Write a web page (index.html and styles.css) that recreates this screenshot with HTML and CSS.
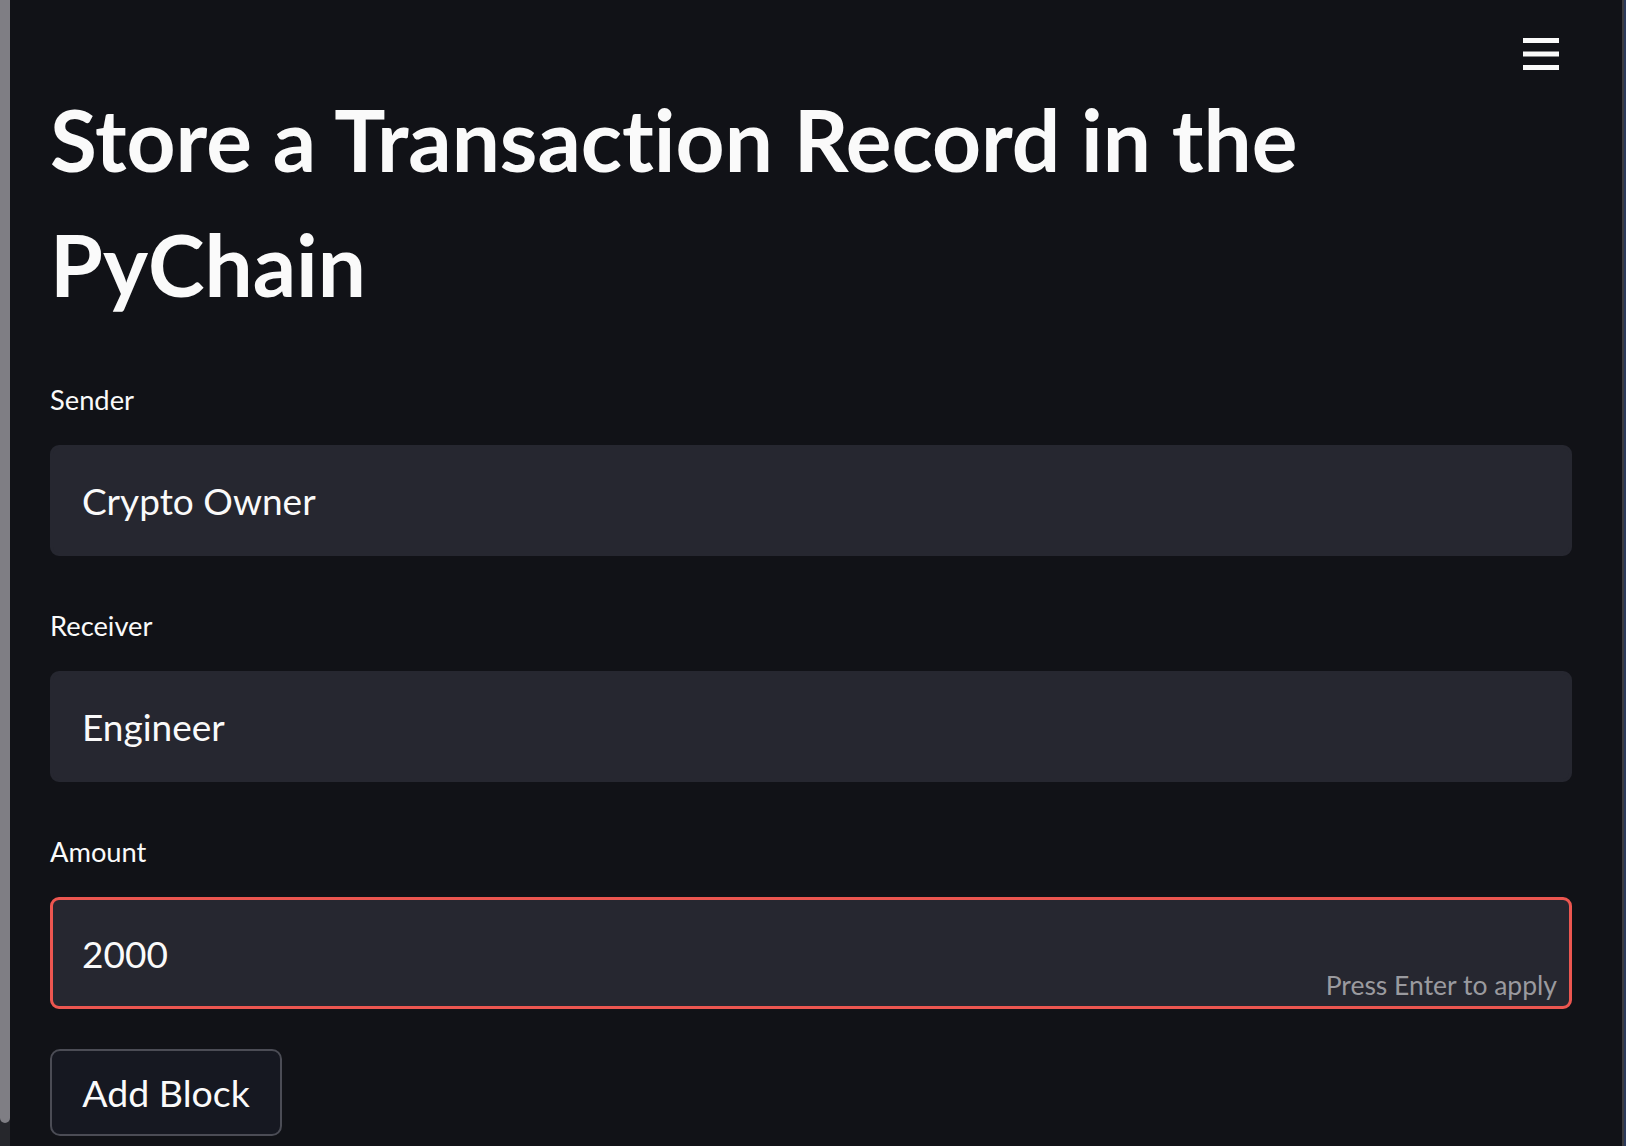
FILE: index.html
```html
<!DOCTYPE html>
<html lang="en">
<head>
<meta charset="utf-8">
<title>PyChain</title>
<link rel="stylesheet" href="styles.css">
</head>
<body>
<div class="app">
  <div class="scroll-track"><div class="scroll-thumb"></div></div>
  <main class="main">
    <button class="menu" aria-label="Menu">
      <svg width="36" height="33" viewBox="0 0 36 33"><rect x="0" y="0" width="36" height="5" fill="#fafafa"/><rect x="0" y="13.5" width="36" height="5" fill="#fafafa"/><rect x="0" y="27" width="36" height="5" fill="#fafafa"/></svg>
    </button>
    <h1 class="title">Store a Transaction Record in the PyChain</h1>
    <div class="field">
      <label class="label">Sender</label>
      <div class="input"><span class="value">Crypto Owner</span></div>
    </div>
    <div class="field">
      <label class="label">Receiver</label>
      <div class="input"><span class="value">Engineer</span></div>
    </div>
    <div class="field">
      <label class="label">Amount</label>
      <div class="input focused"><span class="value">2000</span><span class="hint">Press Enter to apply</span></div>
    </div>
    <button class="btn">Add Block</button>
  </main>
  <div class="edge"><div class="edge-a"></div><div class="edge-b"></div></div>
</div>
</body>
</html>
```
FILE: styles.css
```css
html, body {
  margin: 0;
  padding: 0;
  height: 100%;
  background: #111217;
  overflow: hidden;
}
.app {
  display: flex;
  height: 1146px;
  font-family: Lato, "Noto Sans", sans-serif;
  font-variant-ligatures: none;
  color: #fafafa;
}
.scroll-track {
  width: 10px;
  flex: none;
  background: #26272c;
}
.scroll-thumb {
  height: 1123px;
  background: #7f7e84;
  border-radius: 0 0 5px 5px;
}
.main {
  flex: 1;
  position: relative;
  padding: 77px 50px 0 40px;
}
.menu {
  position: absolute;
  top: 38px;
  right: 63px;
  padding: 0;
  border: 0;
  background: none;
  line-height: 0;
}
.title {
  margin: 0 0 53px;
  font-size: 85.5px;
  line-height: 125px;
  font-weight: 700;
  max-width: 1340px;
}
.field {
  margin-bottom: 50px;
}
.field:last-of-type {
  margin-bottom: 40px;
}
.label {
  display: block;
  font-size: 27.3px;
  line-height: 40px;
  margin-bottom: 25px;
}
.input {
  position: relative;
  box-sizing: border-box;
  height: 111px;
  display: flex;
  align-items: center;
  padding: 0 29px;
  background: #262730;
  border: 3px solid #262730;
  border-radius: 9px;
}
.input.focused {
  border-color: #ec5650;
  height: 112px;
}
.value {
  font-size: 37px;
}
.hint {
  position: absolute;
  right: 12px;
  bottom: 5px;
  font-size: 26.5px;
  color: #9a9a9f;
}
.btn {
  box-sizing: border-box;
  width: 232px;
  height: 87px;
  background: #161821;
  border: 2px solid #4b4c55;
  border-radius: 10px;
  color: #fafafa;
  font-family: Lato, "Noto Sans", sans-serif;
  font-size: 37.5px;
  padding: 0;
}
.edge {
  width: 4px;
  flex: none;
  display: flex;
}
.edge-a {
  width: 2px;
  background: #3c3c40;
}
.edge-b {
  width: 2px;
  background: #2c3a5a;
}
```
